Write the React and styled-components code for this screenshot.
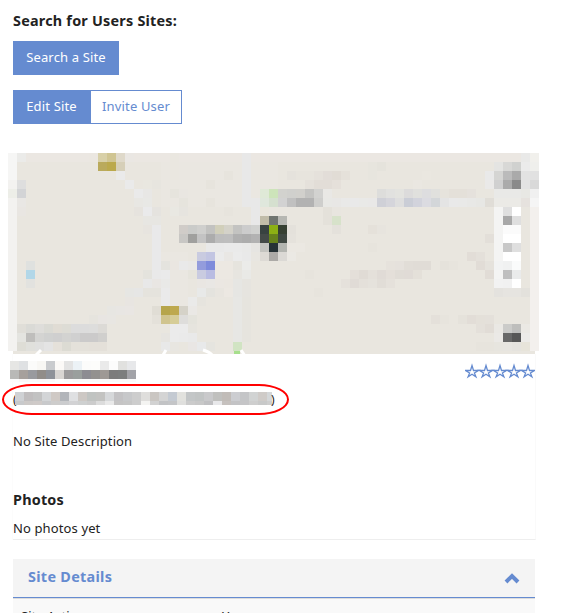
import React from "react";
import styled, { createGlobalStyle } from "styled-components";

const Global = createGlobalStyle`
  * { box-sizing: border-box; }
  html, body { margin: 0; overflow: hidden; background: #fff; }
`;

const Page = styled.main`
  width: 561px;
  height: 613px;
  overflow: hidden;
  padding: 11px 26px 0 13px;
  font-family: "Noto Sans", "Open Sans", sans-serif;
  font-size: 13px;
  line-height: 20px;
  color: #222;
`;

const Heading = styled.h2`
  margin: 0;
  font-size: 14.4px;
  line-height: 20px;
  font-weight: 700;
  white-space: nowrap;
  letter-spacing: ${(p) => p.$tracking || "0.2px"};
`;

const ButtonRow = styled.div`
  display: flex;
  margin-top: ${(p) => p.$top}px;
`;

const Button = styled.button`
  width: ${(p) => p.$width}px;
  height: 34px;
  padding: 0 0 2px;
  border: 1px solid #658bd0;
  border-radius: 0;
  background: ${(p) => (p.$outline ? "#fff" : "#658bd0")};
  color: ${(p) => (p.$outline ? "#658bd0" : "#fff")};
  font: inherit;
  letter-spacing: 0.15px;
  white-space: nowrap;
`;

const MapArt = styled.svg`
  display: block;
  width: 531px;
  height: 201px;
  margin: 29px 0 0 -5px;
  flex: none;
`;

const SiteCard = styled.section`
  width: 523px;
  height: 186px;
  border-right: 1px solid #fafafa;
  border-bottom: 1px solid #eee;
  box-shadow: -1px 0 #fcfcfc;
`;

const TitleRow = styled.div`
  display: flex;
  justify-content: space-between;
  height: 30px;
  margin-left: -3px;
  padding-top: 7px;
`;

const Mosaic = styled.svg`
  display: block;
  flex: none;
`;

const Stars = styled.svg`
  width: 70px;
  height: 16px;
  margin-top: 2px;
`;

const Address = styled.div`
  display: flex;
  width: 287px;
  height: 31px;
  margin-left: -11px;
  padding: 6px 0 0 9px;
  border: 2px solid #f00;
  border-radius: 30px / 15.5px;
  line-height: 15px;
`;

const Paren = styled.span`
  width: ${(p) => p.$width}px;
  font-size: 12px;
  text-indent: ${(p) => p.$indent || 0}px;
`;

const Text = styled.p`
  margin: ${(p) => p.$top}px 0 0;
  line-height: 20px;
  letter-spacing: 0.12px;
`;

const PhotosHeading = styled(Heading)`
  margin-top: 39px;
`;

const Details = styled.section`
  width: 522px;
  height: 80px;
  margin-top: 19px;
  background: #f9f9f9;
`;

const DetailsHeader = styled.header`
  display: flex;
  align-items: center;
  justify-content: space-between;
  height: 39px;
  padding: 0 15px 2px;
  background: #f4f4f4;
  border-bottom: 1px solid #658bd0;
  box-shadow: 0 1px #dcdcdc;
  color: #658bd0;
`;

const Chevron = styled.svg`
  width: 16px;
  height: 11px;
  margin-top: 3px;
`;

const DetailRow = styled.div`
  display: grid;
  grid-template-columns: 201px 1fr;
  padding: 8px 8px 0;
  line-height: 20px;
`;

const CELL = 9;

/* Map tiles: row, first column, then one colour per column. */
const tiles = [
  [0, 9, "ebe7e1 d8d0a8 d0c592 dfd9ca eae7e3"],
  [1, 10, "baaa5c bba94c d6cfb8"],
  [2, 12, "eaeaea"], [3, 13, "eaeaea"],
  [4, 14, "eaeaea e8e7e5"], [5, 14, "e8e7e3 e8e8e5"],
  [6, 14, "e6e3de eaeaeb e5e3df"], [7, 15, "e7e6e2 e7e6e2"],
  [8, 15, "e7e4df e9e9ea"], [9, 16, "e9e9ea"], [10, 16, "e9e9ea"], [11, 16, "e9e9ea"],
  [12, 16, "e9e9ea e4e3de eae6e1 e9e8e6"],
  [13, 15, "e4e3dd e9e9e9 eaeaea"], [14, 15, "e8e8e8 e9e6e3 e9e9e7"],
  [15, 13, "e6e6e3 e6e6e5 e5e3dd e5e3dd eaeaea"],
  [16, 13, "e8e5e1"], [16, 17, "eaeaea"],
  [17, 11, "e7e6e2 e8e6e3 e9e6e3"], [18, 9, "e6e4de e8e5e2 e8e6e2"],
  [0, 1, "ebebe9"], [3, 1, "dedede"], [4, 0, "edeee8 d3d4d6"], [5, 1, "e9e7e4"], [6, 1, "e9e6e2"],
  [3, 15, "e9e7e0 e7e5df"], [4, 18, "e6e4dd e9e6e1"], [5, 19, "e6e4dd"], [6, 18, "e9e8e2 e6e4df"],
  [2, 24, "e7e4dd"], [3, 22, "e7e4dd"], [5, 22, "e7e4dd"], [6, 24, "e7e4dd"],
  [4, 28, "dfe9d7 cde4ba d2d2ce d0d0cd d1d0cc c4c4c2 d2d2d0 e9e8e5"],
  [5, 28, "dfe7dc d5e0cf d2d2d2 c0c0c0 b2b2b2 b2b2b2 cececc e8e8e5 e8e7e5 e9e9e8 e9e9e9 e9e9e7 e9e8e7"],
  [2, 31, "e5e2dc e7e4dd e7e4dd e5e1db e2ddd8 e1dcd5 e5e1da"],
  [3, 33, "e5e1db e2ddd7 e2ddd7 e5e0da"],
  [6, 28, "e9e6dc"], [6, 35, "e4e1da e8e5df"],
  [7, 28, "c0bca8 707570 b6b7b2"], [7, 35, "e4e1da d7e2ca"], [8, 31, "e4e1db"], [8, 36, "e4e1db"],
  [8, 19, "d0ccc8 cacbc9 cfcfcd c2c2c0 d1cfba d4d2c9 c3c3c1 cccccc d0d1cf 384240 8cb014 364032"],
  [9, 19, "c8c7c4 a0a09e c3c3c3 acacac bdbdbd bebebe b0b0b0 adadad b2b2b2 444a48 66821c 3f4842 e5e2dc"],
  [10, 22, "e9e9e9 e9e9e9 eaeaea eaeaea e9e9e8 e6e5e2 c4c4c0 263236 b3b5b0 ebe8e2 ebe8e2"],
  [11, 21, "c9cbe0 c2c5e2 ebebeb e9e7e4 ebebeb e9e9e9 e8e6e1 dddad5 acaaa7 dbd9d5 ebe9e4"],
  [12, 19, "e9e9e9 e9e8e6 939cdc 7e8bdb ece8e2 ece8e2 e6e4de ebebe9"],
  [13, 20, "e6e4dc c9cbe0 b9bce2 ece8e2 ece8e2 e7e5e0 e9e9e6"],
  [14, 21, "e9e6e2 e9e7e4 ebe7e2 ebe7e1 e6e6e3 e6e4df"],
  [15, 21, "e8e9e8 e4e3de e8e5df ece8e2 e6e6e3 e6e4df"],
  [16, 20, "eaeae9 e6e4de"], [17, 20, "eae8e5"], [18, 20, "e4e3dc"], [19, 20, "e6e4de"],
  [20, 19, "eaeaea e9e9e9"], [21, 20, "e9e6e4 e8e9ea e5e4df"],
  [13, 33, "e7e4dd"], [13, 39, "e0dbd5"], [15, 34, "e7e4dd"],
  [1, 40, "e7e5de e5e3dc"], [2, 40, "e7e5de"], [2, 46, "eae7e0"], [3, 44, "e9e6df eae7e1"],
  [4, 41, "dddddb e1e1df e3e3df dcdbdb e0e0dd dddddf e0e0dd e6e3dc e4e0d9 e4e0d9 e5e1dc"],
  [5, 41, "cfd0d7 d5d5db dedede cacdd6 d2d3dc dbdbe1 d3d6d9 e4e4e4 e9e9e9 e9e9e8 e8e8e6 e7e7e4 e0ddd7 ebeae6 ebeae6 ebeae6 e6e2de f5f5f5"],
  [8, 40, "e5e1da e7e4de"], [9, 53, "e3dfd9"], [10, 40, "e7e4dd"],
  [11, 51, "e2ddd7 e4e0da"],
  [12, 42, "e6e2dc e5e1dc e1ddd7 e0dcd6 e0dcd6 e9e6df e5e2db e7e4dd"], [12, 52, "e1dcd6 e5e2dc"],
  [13, 38, "e4dfd9 e0dbd5 e4e0da e0dbd6 e4dfd9 e0dcd6 e0dbd6 e4e0d9"], [13, 53, "e1dcd6"],
  [14, 37, "e5e1db e0dbd6 e4e0da e5e2dc e1ddd7 e5e1db"],
  [18, 47, "e4e0da e7e4dd"], [18, 50, "e5e2db e2ddd7 e4e0d9 e4e0da"],
  [19, 49, "e9e6df"], [19, 52, "e4e0da e1dcd6 eae8e4 cbcbc9 bebebc ebe9e4"],
  [20, 54, "ebe9e6 686868 575757 ecebe8"], [21, 52, "e7e4dd e7e4dd e7e5df e7e5e0 e5e3de e7e4da"],
  [0, 57, "e9e9e8 f1f0ec"], [1, 54, "e4e4e2 d8d8d6 d0d1cf ebebeb efefec"],
  [2, 53, "e9e9e9 d5d5d3 bbbbbb aaaaaa e2e2e2 e1e1e1"],
  [3, 53, "eae9e8 d0d0d0 ababab 8a8a8a e3e3e3 d9d9d9"],
  [4, 54, "e9e9e7 e9e9e7 e9e9e7 e8e8e4 f0f0f0"],
  [6, 54, "f4f4f3 dfdfdf ffffff"], [7, 54, "f4f4f3 a8a8a8 dfdfdf"],
  [8, 54, "f4f4f3 fbfbfb fbfbfb"], [9, 54, "f4f4f3 ffffff ffffff"],
  [10, 54, "f4f4f3 c8c8c8 dfdfdf"], [11, 54, "f4f4f3 ffffff ffffff"],
  [12, 54, "f2f3f3 f0f1f1 fafbfb"], [13, 54, "f4f4f3 bfbfbf eaebeb"],
  [14, 54, "f2f2f2 f1f1f1 ffffff"], [15, 54, "e4e2de e6e4e0 e6e4e0 e3e1dc"],
  [12, 2, "dfe1df"], [13, 2, "b2d7e8"], [14, 2, "e2e2df"],
  [17, 16, "e0ddd5 b6a54b bea94e d5d2c8"], [18, 16, "e4e1da d0c48e d6cd98 dedddb"],
  [19, 1, "e0ded8 dadad6 deddda dadad4 e0dcd4 dddcd5 dcdcdc dcdcdc dddddc dcdad6"],
  [19, 18, "ebebeb ebebeb"],
  [20, 1, "e4e4e0 bfbebc d4d4d2 d0d1d0 cfcfcf d3d3d1 d0d0d0 cbcaca cbcaca d0cfcd"],
  [20, 17, "e6e4e0 ebebeb"],
  [21, 1, "deddd6 e0e0dc e0e0df e4e4e4 e5e1da dcdbd3 e4e1da e4e1da e4e0d9 e4e0d9"],
  [21, 17, "e8e8e8 e8e6e1"], [21, 25, "d1e4c3"],
];

const nameRows = [
  "e6e6e4 dfe1e3 fbfbfa f8f7f4 c9cbce fbf9f7 e3e3e3 ecf2f6 fcfcfb fdfdfb eaeaea fcfcfc e1e1df e7e8ea",
  "b9b9b7 a6a09c 999a9e 918d89 8e9299 d8d5d2 9b9a9b 9a9f9d 8d8c92 93918f 9e9995 7c7c7c 7c7e7e a2a3a8",
  "fdfdfd faf8f8 fafafa faf8f9 fafafa fefefe fbfbfb f9f9f9 fafafa fafafa fafafa fafafa fafafa fafafa",
];

const addressRows = [
  "cfd1d4 c0bdbe c2c2c2 d3d5d7 cfc9c5 b2b5ba dfe0e2 cdc8c4 c0c3c1 c3c3c1 d6d8da c3c2c4 c7c8ca cdcdcd dfdedc cac6c2 d4d4d4 c4cad2 e2e2de c3c6c7 c1c4c4 c9c9cb c0c0be c1bcb8 cccdd1 c4c5c7 d1d3d3 cfcbc8 d4d7d9",
  "c8c9cb cdc9c7 cfcac8 c8c9cb cdcccb cbccce d2d2d4 ced0d0 cccccc dcdcdc e9e9e9 c5c4c4 c6c6c6 cdcdcd f4f4f2 d2d2d2 c2c3c5 c4c5c7 dfdfdd cbcbcb c8c8c8 c0c0c2 e8e8ea c6c1be c3c3c5 c5c5c7 cecece c8c9c9 cecece",
];

function Cells({ row, col = 0, colors }) {
  return colors.split(" ").map((c, i) => (
    <rect key={i} x={(col + i) * CELL} y={row * CELL} width={CELL} height={CELL} fill={"#" + c} />
  ));
}

function SiteMap() {
  return (
    <MapArt viewBox="0 0 531 201" shapeRendering="crispEdges" aria-label="Map">
      <path d="M0 0H531V198H527V201H5V198H0Z" fill="#e9e6df" />
      <path d="M0 0H531V9H0Z" fill="#ebe7e2" />
      <path d="M153 9H270V54H153ZM153 99H180V153H153Z" fill="#eae7e1" />
      <path d="M0 0H9V198H0Z" fill="#f3f2f0" />
      <path d="M0 0H9V27H0Z" fill="#f6f6f5" />
      <path d="M162 0H171V27H162Z" fill="#eae7e0" />
      <path d="M234 0H243V54H234ZM243 45H252V72H243Z" fill="#e8e8e8" />
      <path d="M225 126H234V189H225Z" fill="#e7e7e4" />
      <path d="M234 135H243V189H234Z" fill="#e6e4de" />
      <path d="M486 54H513V135H486Z" fill="#e9e8e4" />
      <path d="M522 54H531V198H522Z" fill="#f3f0ed" />
      {tiles.map(([row, col, colors], i) => (
        <Cells key={i} row={row} col={col} colors={colors} />
      ))}
      <g shapeRendering="auto" fill="none" strokeWidth="3" stroke="#fff">
        <path d="M28 202L33 197M155 202L158 197M195 197Q202 199 205 203M233 197L237 203" />
      </g>
      <path d="M226 198H232V201H226Z" fill="#a7df8c" />
      <path d="M0 198H5V201H0ZM527 198H531V201H527Z" fill="#fff" />
    </MapArt>
  );
}

function PixelText({ rows, width, height }) {
  return (
    <Mosaic width={width} height={height} viewBox={`0 0 ${width} ${height}`} shapeRendering="crispEdges">
      {rows.map((colors, i) => <Cells key={i} row={i} colors={colors} />)}
    </Mosaic>
  );
}

export default function App() {
  return (
    <>
      <Global />
      <Page>
        <Heading $tracking="0.22px">Search for Users Sites:</Heading>
        <ButtonRow $top={10}>
          <Button $width={106}>Search a Site</Button>
        </ButtonRow>
        <ButtonRow $top={15}>
          <Button $width={77}>Edit Site</Button>
          <Button $width={92} $outline>Invite User</Button>
        </ButtonRow>
        <SiteMap />
        <SiteCard>
          <TitleRow>
            <PixelText rows={nameRows} width={126} height={21} />
            <Stars viewBox="0 0 70 16" aria-label="Rating">
              {[0, 1, 2, 3, 4].map((n) => (
                <path
                  key={n}
                  transform={`translate(${n * 14} 0)`}
                  d="M7 2.5L8.5 7.5H13.6L9.4 10L10.9 13.8L7 11.3L3.1 13.8L4.6 10L0.4 7.5H5.5Z"
                  fill="none"
                  stroke="#658bd0"
                  strokeWidth="1.3"
                />
              ))}
            </Stars>
          </TitleRow>
          <Address>
            <Paren $width={2}>(</Paren>
            <PixelText rows={addressRows} width={257} height={13} />
            <Paren $width={5} $indent={-1}>)</Paren>
          </Address>
          <Text $top={16}>No Site Description</Text>
          <PhotosHeading>Photos</PhotosHeading>
          <Text $top={8}>No photos yet</Text>
        </SiteCard>
        <Details>
          <DetailsHeader>
            <Heading $tracking="0.3px">Site Details</Heading>
            <Chevron viewBox="0 0 16 11">
              <path d="M2 9L8 3L14 9" fill="none" stroke="#658bd0" strokeWidth="4" />
            </Chevron>
          </DetailsHeader>
          <DetailRow>
            <span>Site Active</span>
            <span>Yes</span>
          </DetailRow>
        </Details>
      </Page>
    </>
  );
}
